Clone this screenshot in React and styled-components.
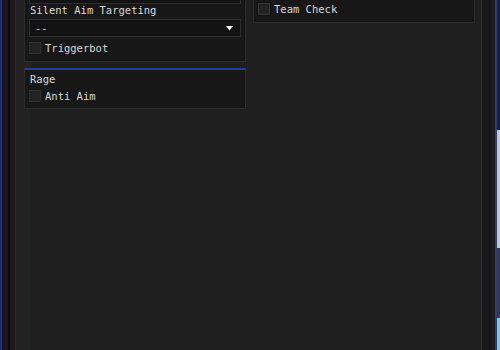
import React from "react";
import styled, { createGlobalStyle } from "styled-components";

const Global = createGlobalStyle`
  html, body { margin: 0; padding: 0; background: #0d0d10; }
  body { font-family: "DejaVu Sans Mono", "Liberation Mono", monospace; }
  * { box-sizing: border-box; }
`;

const Screen = styled.div`
  display: flex;
  width: 500px;
  height: 350px;
  overflow: hidden;
`;

const WindowEdge = styled.div`
  width: 2px;
  background: linear-gradient(90deg, #1b2268 0%, #2a3690 100%);
`;

const FrameLeft = styled.div`
  width: 14px;
  background: linear-gradient(
    90deg,
    #18181b 0 6px,
    #0b0b0e 6px 8px,
    #1a1a1b 8px 13px,
    #2c2c2d 13px 14px
  );
`;

const FrameRight = styled.div`
  width: 15px;
  background: linear-gradient(
    90deg,
    #1a1a1b 0 7px,
    #0c0c0e 7px 8px,
    #1b1b1f 8px 13px,
    #2a3c8c 13px 15px
  );
`;

const Desktop = styled.div`
  width: 3px;
  background: linear-gradient(
    180deg,
    #1c2030 0 130px,
    #cfc7ad 130px 248px,
    #3a3a3e 248px 318px,
    #6fd0d8 318px 350px
  );
`;

const Content = styled.div`
  flex: 1;
  overflow: hidden;
  padding-left: 8px;
  background: linear-gradient(90deg, #222223 0 15px, #1f1f20 15px);
  border-right: 1px solid #303031;
`;

/* the page is scrolled: the tops of the first panels lie above the view */
const Columns = styled.div`
  display: grid;
  grid-template-columns: 222px 222px;
  column-gap: 7px;
  align-items: start;
  margin-top: -66px;
`;

const Column = styled.div`
  display: flex;
  flex-direction: column;
  gap: 6px;
`;

const Panel = styled.div`
  display: flex;
  flex-direction: column;
  background: #171718;
  border: 1px solid #2c2c2d;
  border-top: 2px solid #1f3e9e;
  padding: 3px 4px ${(p) => p.$bottom || 7}px 4px;
`;

const Label = styled.div`
  height: 13px;
  line-height: 13px;
  font-size: 10.5px;
  color: #d9d9d9;
  padding-left: 1px;
  margin-top: ${(p) => p.$mt || 0}px;
  white-space: nowrap;
`;

const CheckRow = styled.div`
  display: flex;
  align-items: center;
  gap: 4px;
  height: 12px;
  margin-top: ${(p) => (p.$mt === undefined ? 4 : p.$mt)}px;
  font-size: 10.5px;
  color: #d9d9d9;
  white-space: nowrap;
`;

const Box = styled.span`
  width: 12px;
  height: 12px;
  background: #232324;
  border: 1px solid #303031;
  flex: none;
`;

const Select = styled.div`
  display: flex;
  align-items: center;
  justify-content: space-between;
  height: 18px;
  margin-top: ${(p) => p.$mt || 0}px;
  padding: 0 7px 0 5px;
  background: #121213;
  border: 1px solid #2f2f30;
  font-size: 10.5px;
  color: #d9d9d9;
`;

const Arrow = () => (
  <svg width="7" height="5" viewBox="0 0 7 5">
    <path d="M0 0 H7 L3.5 4.5 Z" fill="#f2f2f2" />
  </svg>
);

const Check = ({ children, mt }) => (
  <CheckRow $mt={mt}>
    <Box />
    <span>{children}</span>
  </CheckRow>
);

export default function App() {
  return (
    <>
      <Global />
      <Screen>
        <WindowEdge />
        <FrameLeft />
        <Content>
          <Columns>
            <Column>
              <Panel>
                <Label>Aimbot</Label>
                <Check>Enabled</Check>
                <Label $mt={3}>Aim Part</Label>
                <Select $mt={2}>
                  <span>Head</span>
                  <Arrow />
                </Select>
                <Label>Silent Aim Targeting</Label>
                <Select $mt={2}>
                  <span>--</span>
                  <Arrow />
                </Select>
                <Check mt={5}>Triggerbot</Check>
              </Panel>
              <Panel $bottom={6}>
                <Label>Rage</Label>
                <Check>Anti Aim</Check>
              </Panel>
            </Column>
            <Column>
              <Panel>
                <Label>ESP</Label>
                <Check>Enabled</Check>
                <Check>Boxes</Check>
                <Check>Names</Check>
                <Check mt={3}>Team Check</Check>
              </Panel>
            </Column>
          </Columns>
        </Content>
        <FrameRight />
        <Desktop />
      </Screen>
    </>
  );
}
